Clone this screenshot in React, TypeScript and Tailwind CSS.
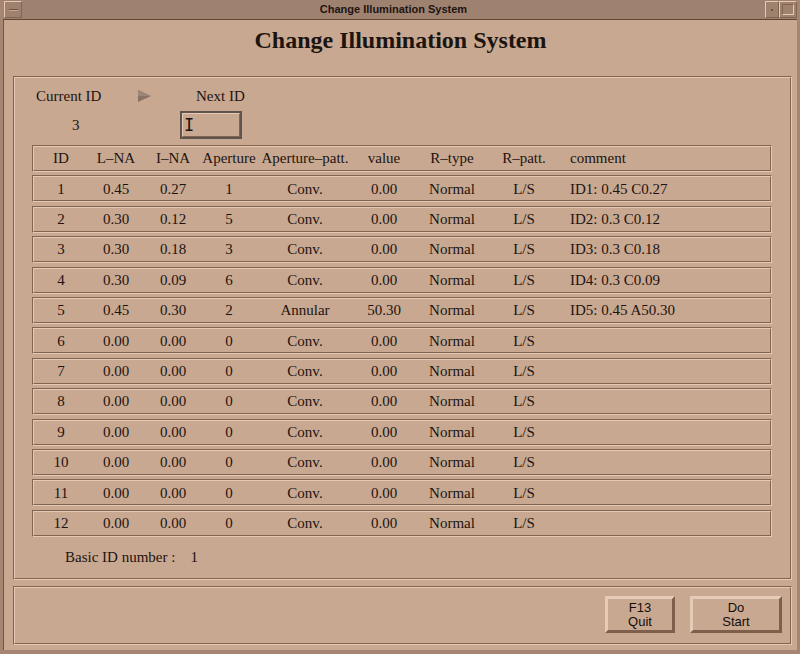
const dark = 'border-t-[#836451] border-l-[#836451] border-b-[#e4c9b4] border-r-[#e4c9b4]';
const light = 'border-t-[#e4c9b4] border-l-[#e4c9b4] border-b-[#836451] border-r-[#836451]';

type Row = [string, string, string, string, string, string, string, string, string];

const rows: Row[] = [
  ['1', '0.45', '0.27', '1', 'Conv.', '0.00', 'Normal', 'L/S', 'ID1: 0.45 C0.27'],
  ['2', '0.30', '0.12', '5', 'Conv.', '0.00', 'Normal', 'L/S', 'ID2: 0.3 C0.12'],
  ['3', '0.30', '0.18', '3', 'Conv.', '0.00', 'Normal', 'L/S', 'ID3: 0.3 C0.18'],
  ['4', '0.30', '0.09', '6', 'Conv.', '0.00', 'Normal', 'L/S', 'ID4: 0.3 C0.09'],
  ['5', '0.45', '0.30', '2', 'Annular', '50.30', 'Normal', 'L/S', 'ID5: 0.45 A50.30'],
  ['6', '0.00', '0.00', '0', 'Conv.', '0.00', 'Normal', 'L/S', ''],
  ['7', '0.00', '0.00', '0', 'Conv.', '0.00', 'Normal', 'L/S', ''],
  ['8', '0.00', '0.00', '0', 'Conv.', '0.00', 'Normal', 'L/S', ''],
  ['9', '0.00', '0.00', '0', 'Conv.', '0.00', 'Normal', 'L/S', ''],
  ['10', '0.00', '0.00', '0', 'Conv.', '0.00', 'Normal', 'L/S', ''],
  ['11', '0.00', '0.00', '0', 'Conv.', '0.00', 'Normal', 'L/S', ''],
  ['12', '0.00', '0.00', '0', 'Conv.', '0.00', 'Normal', 'L/S', ''],
];

const header: Row = ['ID', 'L\u2013NA', 'I\u2013NA', 'Aperture', 'Aperture\u2013patt.', 'value', 'R\u2013type', 'R\u2013patt.', 'comment'];

// column widths, table starts at x=32
const colW = ['w-[54px]', 'w-[56px]', 'w-[58px]', 'w-[54px]', 'w-[98px]', 'w-[60px]', 'w-[76px]', 'w-[68px]'];

function Etched({ className, children }: { className?: string; children?: React.ReactNode }) {
  return (
    <div className={`border ${dark} ${className ?? ''}`}>
      <div className={`border ${light} h-full`}>{children}</div>
    </div>
  );
}

function TableRow({ cells }: { cells: Row }) {
  return (
    <Etched className="h-[27px]">
      <div className="flex items-center h-full whitespace-nowrap">
        {colW.map((w, i) => (
          <div key={i} className={`${w} shrink-0 text-center`}>
            {cells[i]}
          </div>
        ))}
        <div className="pl-[12px]">{cells[8]}</div>
      </div>
    </Etched>
  );
}

function Button({ top, bottom, w }: { top: string; bottom: string; w: string }) {
  return (
    <div
      className={`${w} h-[37px] border-[3px] border-t-[#e6cbb6] border-l-[#e6cbb6] border-b-[#7d5f4c] border-r-[#7d5f4c] flex flex-col items-center justify-center leading-[14px] text-[13px] text-[#140d09] font-['Liberation_Sans',sans-serif]`}
    >
      <span>{top}</span>
      <span>{bottom}</span>
    </div>
  );
}

export default function App() {
  return (
    <div className="w-[800px] h-[654px] bg-[#c9a891] border-x-[3px] border-b-[4px] border-[#a68672] flex flex-col text-[#1c1410] font-['Liberation_Serif',serif] overflow-hidden">
      {/* title bar */}
      <div className="h-[20px] shrink-0 bg-[#9f8170] border-b border-[#5e4536] flex items-center">
        <div className={`w-[18px] h-[17px] ml-[1px] border ${light} flex items-center justify-center`}>
          <div className="w-[9px] h-[2px] bg-[#6e5242] border-b border-[#c9a891]" />
        </div>
        <div className="flex-1 text-center text-[11px] font-bold font-['Liberation_Sans',sans-serif] text-[#1c1410]">
          Change Illumination System
        </div>
        <div className={`w-[14px] h-[17px] border ${light} flex items-center justify-center`}>
          <div className="w-[2px] h-[2px] bg-[#6e5242]" />
        </div>
        <div className={`w-[18px] h-[17px] border ${light} flex items-center justify-center`}>
          <div className={`w-[12px] h-[11px] border ${dark}`} />
        </div>
      </div>

      <div className="flex-1 flex flex-col border-l border-[#735644]">
        <h1 className="mt-[6px] h-[28px] leading-[28px] text-center text-[24px] font-bold">
          Change Illumination System
        </h1>

        {/* main panel */}
        <Etched className="mt-[22px] ml-[9px] mr-[5px] h-[504px]">
          <div className="pt-[9px] pl-[21px] text-[15px]">
            <div className="flex items-center h-[18px]">
              <span className="w-[102px]">Current ID</span>
              <svg width="13" height="12" viewBox="0 0 13 12">
                <polygon points="0,0 13,6 0,12" fill="#8b7364" />
                <polygon points="0,0 13,6 0,6" fill="#9d8676" />
              </svg>
              <span className="ml-[45px]">Next ID</span>
            </div>
            <div className="flex items-center mt-[6px] h-[28px]">
              <span className="w-[144px] pl-[36px]">3</span>
              <div className="w-[62px] h-[28px] border-2 border-[#5f544c] flex items-center">
                <div className={`w-full h-full border ${light} flex items-center pl-[1px]`}>
                  <span className="font-['DejaVu_Sans_Mono',monospace] text-[17px] leading-none">I</span>
                </div>
              </div>
            </div>

            <div className="ml-[-4px] mt-[6px] w-[740px] flex flex-col gap-[3.4px]">
              <TableRow cells={header} />
              {rows.map((r) => (
                <TableRow key={r[0]} cells={r} />
              ))}
            </div>

            <div className="flex items-center mt-[12px] h-[18px] pl-[29px]">
              <span>Basic ID number :</span>
              <span className="ml-[15px]">1</span>
            </div>
          </div>
        </Etched>

        {/* bottom panel */}
        <Etched className="mt-[6px] ml-[9px] mr-[5px] h-[59px]">
          <div className="flex justify-end gap-[15px] pt-[8px] pr-[8px]">
            <Button top="F13" bottom="Quit" w="w-[70px]" />
            <Button top="Do" bottom="Start" w="w-[92px]" />
          </div>
        </Etched>
      </div>
    </div>
  );
}
